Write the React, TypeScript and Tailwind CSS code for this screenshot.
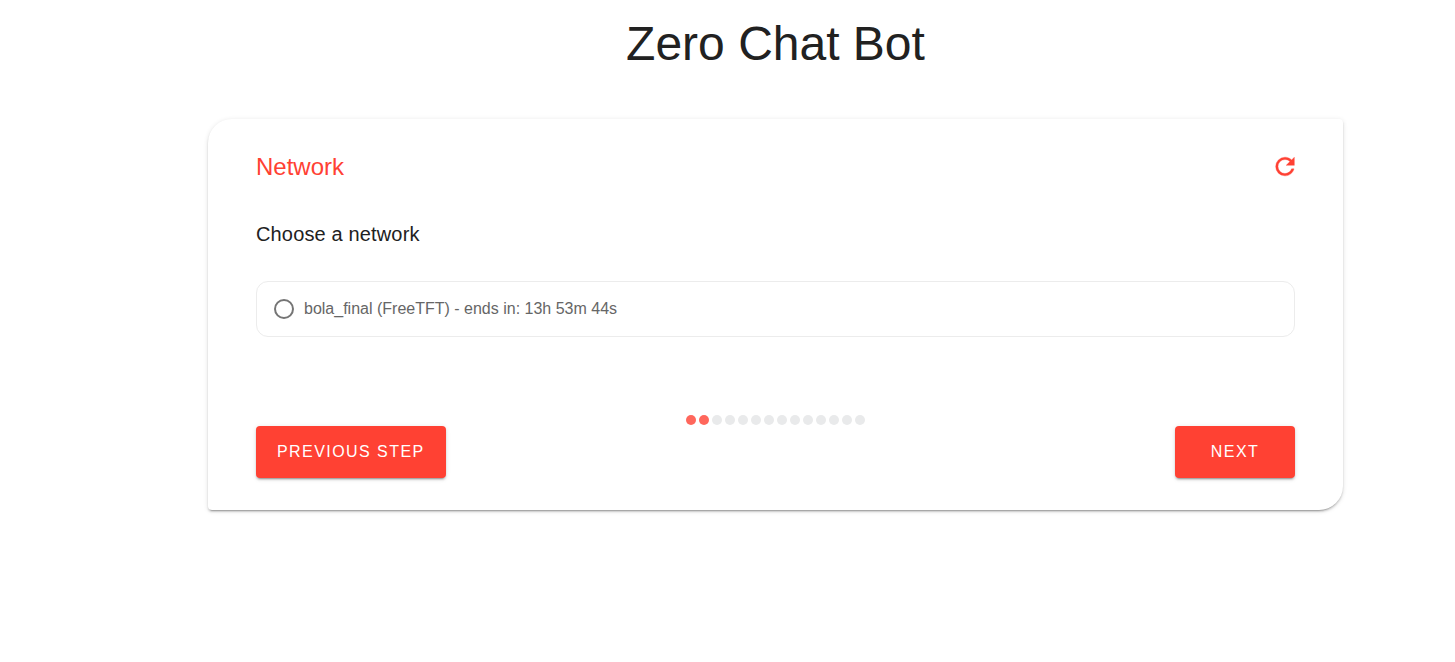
import React, { useState } from 'react';

const STEP_COUNT = 14;
const CURRENT_STEP = 2;

type ActionButtonProps = { children: React.ReactNode };

function ActionButton({ children }: ActionButtonProps) {
  return (
    <button
      type="button"
      className="mt-[11px] h-[52px] min-w-[120px] rounded bg-[#ff4133] px-[21px] text-base tracking-[0.09em] text-white uppercase shadow-[0_3px_1px_-2px_rgba(0,0,0,0.2),0_2px_2px_0_rgba(0,0,0,0.14),0_1px_5px_0_rgba(0,0,0,0.12)]"
    >
      {children}
    </button>
  );
}

function StepDots() {
  return (
    <div
      role="progressbar"
      aria-label="Steps"
      aria-valuemin={0}
      aria-valuemax={STEP_COUNT}
      aria-valuenow={CURRENT_STEP}
      className="flex gap-[3px]"
    >
      {Array.from({ length: STEP_COUNT }, (_, i) => (
        <span
          key={i}
          className={
            i < CURRENT_STEP
              ? 'size-2.5 rounded-full bg-[#ff675c]'
              : 'size-2.5 rounded-full bg-[#e9eaeb]'
          }
        />
      ))}
    </div>
  );
}

export default function App() {
  const [network, setNetwork] = useState('');

  return (
    <main className="min-h-screen bg-white pr-28 pl-52 font-['Liberation_Sans',Arial,sans-serif] text-[#212121]">
      <h1 className="pt-5 text-center text-5xl leading-[48px]">Zero Chat Bot</h1>

      <section className="mt-[51px] rounded rounded-tl-3xl rounded-br-3xl bg-white px-12 py-8 shadow-[0_3px_1px_-2px_rgba(0,0,0,0.2),0_2px_2px_0_rgba(0,0,0,0.14),0_1px_5px_0_rgba(0,0,0,0.12)]">
        <header className="flex items-center justify-between text-[#ff4133]">
          <h2 className="text-2xl leading-8">Network</h2>
          <button type="button" aria-label="Refresh" className="-mr-1">
            <svg viewBox="0 0 24 24" className="size-7" fill="currentColor" stroke="currentColor" strokeWidth="0.3" aria-hidden="true">
              <path d="M17.65 5.95C16.2 4.5 14.21 3.6 12 3.6A8 8 0 0 0 4 11.6A8 8 0 0 0 12 19.6C15.73 19.6 18.84 17.05 19.73 13.6H17.65C16.83 15.93 14.61 17.6 12 17.6A6 6 0 0 1 6 11.6A6 6 0 0 1 12 5.6C13.66 5.6 15.14 6.29 16.22 7.38L13 10.6H20V3.6L17.65 5.95Z" />
            </svg>
          </button>
        </header>

        <h3 id="network-heading" className="mt-[35px] text-xl leading-8 tracking-[0.0075em]">
          Choose a network
        </h3>

        <div
          role="radiogroup"
          aria-labelledby="network-heading"
          className="mt-[31px] rounded-xl border border-[#ececec] px-[17px]"
        >
          <label className="flex h-[54px] items-center gap-[10px] text-base text-[#666666]">
            <input
              type="radio"
              name="network"
              value="bola_final"
              checked={network === 'bola_final'}
              onChange={(event) => setNetwork(event.target.value)}
              className="size-5 shrink-0 appearance-none rounded-full border-2 border-[#757575] bg-clip-content p-[3px] checked:border-[#ff4133] checked:bg-[#ff4133]"
            />
            bola_final (FreeTFT) - ends in: 13h 53m 44s
          </label>
        </div>

        <footer className="mt-[78px] grid grid-cols-[1fr_auto_1fr]">
          <div>
            <ActionButton>Previous step</ActionButton>
          </div>
          <StepDots />
          <div className="text-right">
            <ActionButton>Next</ActionButton>
          </div>
        </footer>
      </section>
    </main>
  );
}
